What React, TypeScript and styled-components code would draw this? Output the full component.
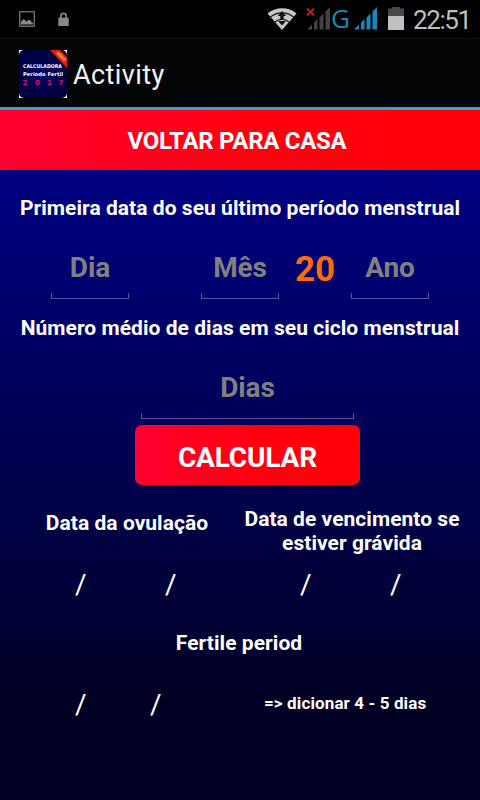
import React from 'react';
import styled, { createGlobalStyle } from 'styled-components';

const GlobalStyle = createGlobalStyle`
  * { box-sizing: border-box; }
  html, body { margin: 0; background: #000; }
  body { font-family: Roboto, "Liberation Sans", sans-serif; color: #fff; }
`;

const Screen = styled.div`
  width: 480px;
  height: 800px;
  overflow: hidden;
  display: flex;
  flex-direction: column;
`;

const StatusBar = styled.header`
  height: 38px;
  display: flex;
  align-items: center;
  padding-left: 19px;
  background: #000;
`;

const Spacer = styled.div<{ $w?: number }>`
  flex: ${(p) => (p.$w ? `0 0 ${p.$w}px` : '1')};
`;

const Network = styled.span`
  font-size: 26px;
  line-height: 36px;
  width: 21px;
  margin-left: -1px;
  margin-right: 1px;
  padding-bottom: 3px;
  font-family: "Open Sans", sans-serif;
  color: #1588b4;
`;

const Clock = styled.span`
  font-size: 26px;
  line-height: 38px;
  width: 67px;
  padding-top: 1px;
  letter-spacing: -1.4px;
  color: #bebebe;
`;

const ActionBar = styled.div`
  height: 72px;
  display: flex;
  align-items: center;
  padding-left: 19px;
  gap: 6px;
  background: #040506;
  border-top: 1px solid #111;
  border-bottom: 3px solid #33a5cc;
`;

const IconSlot = styled.div`
  display: flex;
  padding-top: 2px;
`;

const Title = styled.h1`
  margin: 0;
  font-size: 27px;
  font-weight: 400;
  line-height: 36px;
  letter-spacing: 0.4px;
  color: #f3f3f3;
  padding-top: 3px;
`;

const Content = styled.main`
  flex: 1;
  display: flex;
  flex-direction: column;
  background: linear-gradient(#000088 0%, #000080 12%, #000022 88%, #000022 100%);
`;

const RedButton = styled.button<{ $rounded?: boolean }>`
  display: block;
  flex: none;
  align-self: center;
  width: ${(p) => (p.$rounded ? 225 : 480)}px;
  height: 60px;
  margin-left: ${(p) => (p.$rounded ? 15 : 0)}px;
  padding: ${(p) => (p.$rounded ? '4px 0 0' : '2px 6px 0 0')};
  border: 0;
  border-radius: ${(p) => (p.$rounded ? 7 : 0)}px;
  background: linear-gradient(90deg, #ff0030, #ff0010 55%, #ff0008);
  color: #fff;
  font-family: inherit;
  font-weight: 700;
  font-size: ${(p) => (p.$rounded ? 28 : 24)}px;
  letter-spacing: ${(p) => (p.$rounded ? -0.15 : -0.28)}px;
`;

const Label = styled.h2<{ $top: number; $h: number }>`
  margin: ${(p) => p.$top}px 0 0;
  height: ${(p) => p.$h}px;
  flex: none;
  font-size: 21px;
  font-weight: 700;
  line-height: 24px;
  letter-spacing: 0.04px;
  text-align: center;
  white-space: pre-line;
`;

const FertileLabel = styled(Label)`
  padding-right: 2px;
`;

const DateFields = styled.div`
  display: grid;
  grid-template-columns: 150px 78px 72px 78px;
  padding-left: 51px;
  height: 59px;
  margin-top: 20px;
`;

const Field = styled.input<{ $w: number }>`
  width: ${(p) => p.$w}px;
  height: 59px;
  padding: 0 0 5px;
  border: 0;
  outline: 0;
  text-align: center;
  font-family: inherit;
  font-weight: 700;
  font-size: 28px;
  letter-spacing: -0.1px;
  color: #fff;
  background:
    linear-gradient(#5454a0, #5454a0) bottom / 100% 1px no-repeat,
    linear-gradient(#5454a0, #5454a0) left bottom / 1px 6px no-repeat,
    linear-gradient(#5454a0, #5454a0) right bottom / 1px 6px no-repeat;
  &::placeholder { color: #808080; opacity: 1; }
`;

const Century = styled.span`
  font-size: 35px;
  font-weight: 700;
  line-height: 60px;
  text-align: center;
  color: #ff6a08;
`;

const CycleField = styled.div`
  display: flex;
  justify-content: center;
  flex: none;
  padding-left: 15px;
  height: 65px;
`;

const Results = styled.section`
  display: grid;
  grid-template-columns: 240px 240px;
  margin-top: 22px;
  height: 96px;
`;

const Result = styled.div<{ $inset: 'left' | 'right' }>`
  display: flex;
  flex-direction: column;
  ${Label} { padding-${(p) => p.$inset}: ${(p) => (p.$inset === 'left' ? 14 : 16)}px; }
`;

const Slashes = styled.div<{ $left: number; $step: number }>`
  display: grid;
  grid-template-columns: repeat(2, ${(p) => p.$step}px);
  padding-left: ${(p) => p.$left}px;
  font-size: 28px;
  line-height: 36px;
`;

const Fertile = styled.div`
  display: grid;
  grid-template-columns: 264px 1fr;
  align-items: center;
  margin-top: 32px;
  height: 36px;
`;

const Note = styled.span`
  font-size: 17px;
  font-weight: 700;
  line-height: 20px;
  letter-spacing: 0.12px;
  padding-bottom: 4px;
`;

const Picture = () => (
  <svg width="16" height="16" viewBox="0 0 16 16">
    <rect x=".75" y=".75" width="14.5" height="14.5" fill="none" stroke="#777" strokeWidth="1.3" />
    <path d="M2 13.5v-3l1.5-1 1-1.5 1 .5 1.5 2 2-1 1-1 1.5 1 1 1.5 1.5 1v1.5z" fill="#888" />
  </svg>
);

const Lock = () => (
  <svg width="11" height="14" viewBox="0 0 11 14">
    <path d="M2.8 6V4a2.7 2.7 0 0 1 5.4 0v2" fill="none" stroke="#888" strokeWidth="1.7" />
    <path d="M.3 5.7h10.4V14H.3z" fill="#888" />
  </svg>
);

const Wifi = () => (
  <svg width="30" height="22" viewBox="1 0 30 22">
    <path d="M.5 5.4C8.5-1.4 21.5-1.4 29.5 5.4L15 22z" fill="#c8c8c8" />
    <path d="M3.5 9C10 3.4 20 3.4 26.5 9M8 14C12 10.6 18 10.6 22 14" fill="none" stroke="#111" strokeWidth="1.2" />
    <path d="M15 3l4.2 5h-2.5v3h-3.4V8h-2.5zM15 17.5l-4-4.5h8z" fill="#111" />
  </svg>
);

const Signal = ({ color, crossed }: { color: string; crossed?: boolean }) => (
  <svg width="26" height="24" viewBox="0 1 26 24">
    <path d="M1 23.5l5-5v5zM8 23.5v-7l3.5-3.5v10.5zM13.5 23.5V11.5l4-4v16zM19.5 23.5V5.5L24 1v22.5z" fill={color} />
    {crossed && <path d="M1 2.5l7 7M8 2.5l-7 7" stroke="#a52128" strokeWidth="2.4" />}
  </svg>
);

const Battery = () => (
  <svg width="16" height="24" viewBox="0 1 16 24">
    <path d="M4 .5h8v2h4V10H0V2.5h4z" fill="#484848" />
    <path d="M0 10h16v14H0z" fill="#c0c0c0" />
  </svg>
);

const AppIcon = () => (
  <svg width="48" height="48" viewBox="0 0 48 48">
    <defs>
      <radialGradient id="navy"><stop stopColor="#000064" /><stop offset="1" stopColor="#000040" /></radialGradient>
      <clipPath id="tile"><rect width="48" height="48" rx="5" /></clipPath>
    </defs>
    <rect width="48" height="48" fill="#fff" />
    <g clipPath="url(#tile)">
      <rect width="48" height="48" fill="url(#navy)" />
      <path d="M31 0h10l7 7v11z" fill="#ef1511" />
      <text transform="translate(37 3.5) rotate(45)" fontSize="4.5" fontWeight="700" fill="#ffd75a" textLength="12">NOVO</text>
    </g>
    <g fontFamily="'DejaVu Sans', sans-serif" fontWeight="700" fill="#fff">
      <text x="4" y="18" fontSize="5.2" textLength="39" lengthAdjust="spacingAndGlyphs">CALCULADORA</text>
      <text x="4" y="26" fontSize="5.2" textLength="40" lengthAdjust="spacingAndGlyphs">Periodo Fertil</text>
      <g fontSize="7" fill="#d91368" textAnchor="middle">
        <text x="6" y="34.5">2</text>
        <text x="18.5" y="34.5">0</text>
        <text x="30.5" y="34.5">1</text>
        <text x="42" y="34.5">7</text>
      </g>
    </g>
  </svg>
);

export default function App() {
  return (
    <>
      <GlobalStyle />
      <Screen>
        <StatusBar>
          <Picture />
          <Spacer $w={23} />
          <Lock />
          <Spacer />
          <Wifi />
          <Spacer $w={8} />
          <Signal color="#444" crossed />
          <Network>G</Network>
          <Signal color="#1688b8" />
          <Spacer $w={9} />
          <Battery />
          <Spacer $w={9} />
          <Clock>22:51</Clock>
        </StatusBar>
        <ActionBar>
          <IconSlot><AppIcon /></IconSlot>
          <Title>Activity</Title>
        </ActionBar>
        <Content>
          <RedButton>VOLTAR PARA CASA</RedButton>
          <Label $top={26} $h={24}>Primeira data do seu último período menstrual</Label>
          <DateFields>
            <Field $w={78} placeholder="Dia" aria-label="Dia" />
            <Field $w={78} placeholder="Mês" aria-label="Mês" />
            <Century>20</Century>
            <Field $w={78} placeholder="Ano" aria-label="Ano" />
          </DateFields>
          <Label $top={17} $h={24}>Número médio de dias em seu ciclo menstrual</Label>
          <Spacer $w={20} />
          <CycleField><Field $w={213} placeholder="Dias" aria-label="Dias" /></CycleField>
          <RedButton $rounded>CALCULAR</RedButton>
          <Results>
            <Result $inset="left">
              <Label $top={4} $h={56}>Data da ovulação</Label>
              <Slashes $left={75} $step={90}><span>/</span><span>/</span></Slashes>
            </Result>
            <Result $inset="right">
              <Label $top={0} $h={60}>{'Data de vencimento se\nestiver grávida'}</Label>
              <Slashes $left={60} $step={90}><span>/</span><span>/</span></Slashes>
            </Result>
          </Results>
          <FertileLabel $top={28} $h={24}>Fertile period</FertileLabel>
          <Fertile>
            <Slashes $left={75} $step={75}><span>/</span><span>/</span></Slashes>
            <Note>=&gt; dicionar 4 - 5 dias</Note>
          </Fertile>
        </Content>
      </Screen>
    </>
  );
}
